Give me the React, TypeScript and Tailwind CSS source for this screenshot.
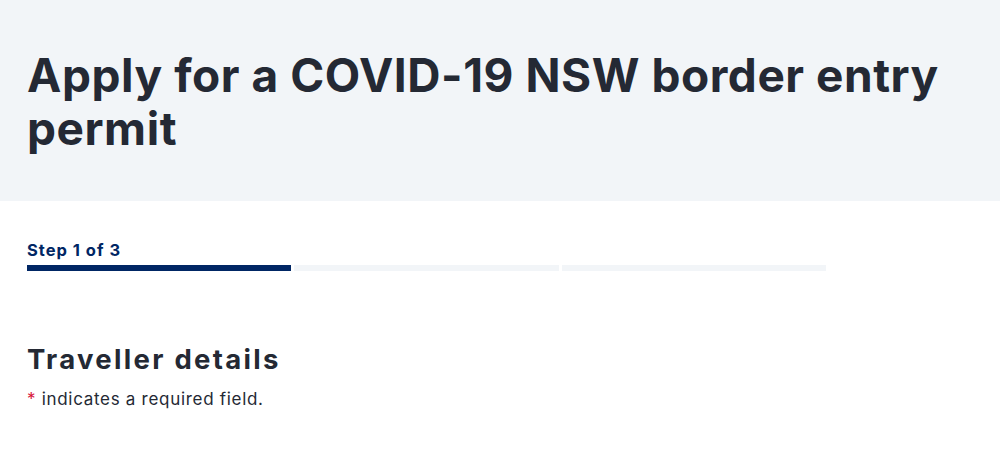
export default function App() {
  return (
    <div className="w-[1000px] h-[470px] bg-white overflow-hidden" style={{ fontFamily: "Inter, 'Noto Sans', sans-serif" }}>
      <div className="bg-[#f2f5f8] h-[201px] pl-[27px] pt-[49px]">
        <h1 className="text-[46px] leading-[53px] font-bold text-[#242934] tracking-[0.55px]">
          Apply for a COVID-19 NSW border entry
          <br />
          permit
        </h1>
      </div>
      <div className="pl-[27px] pt-[39px]">
        <div className="text-[16.5px] leading-[20px] font-bold text-[#002664] tracking-[1px]">Step 1 of 3</div>
        <div className="flex gap-[3px] mt-[5px] w-[800px]">
          <div className="h-[6px] w-[264px] bg-[#002664]" />
          <div className="h-[6px] w-[265px] bg-[#f2f5f8]" />
          <div className="h-[6px] w-[264px] bg-[#f2f5f8]" />
        </div>
        <h2 className="mt-[71px] text-[27.5px] leading-[34px] font-bold text-[#242934] tracking-[2.3px]">Traveller details</h2>
        <p className="mt-[12px] text-[17px] leading-[22px] text-[#242934] tracking-[0.7px]">
          <span className="text-[#d7153a]">*</span> indicates a required field.
        </p>
      </div>
    </div>
  );
}
